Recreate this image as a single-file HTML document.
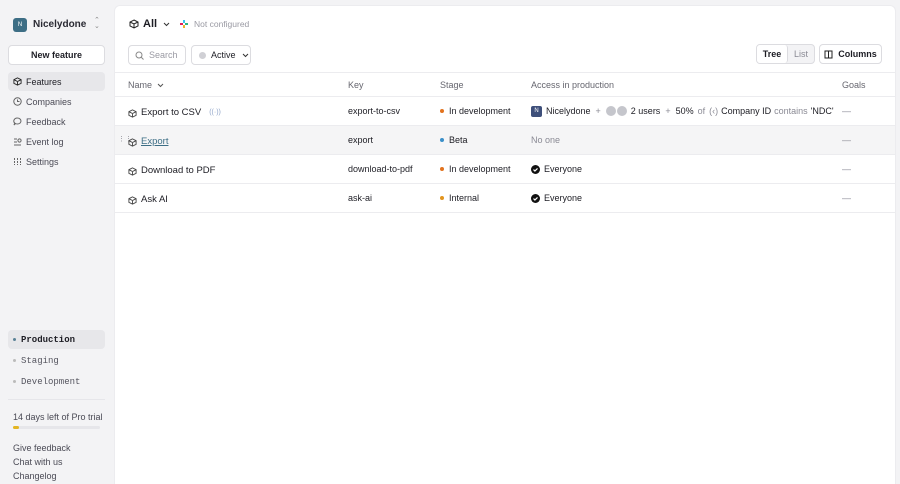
<!DOCTYPE html>
<html style="width:900px;height:484px;overflow:hidden"><head><style>
*{box-sizing:border-box;margin:0;padding:0}
body{width:900px;height:484px;background:#f3f3f5;font-family:"Liberation Sans",sans-serif;font-size:9px;color:#1d1d24;position:relative;overflow:hidden}
.abs{position:absolute}
.main{position:absolute;left:114px;top:5px;width:782px;height:500px;background:#fff;border-radius:6px;border:1px solid #ececef}
.nav{position:absolute;left:8px;width:97px;height:19px;border-radius:4px;display:flex;align-items:center;padding-left:5px;color:#4a4a55}
.nav svg{margin-right:4px}
.btn{position:absolute;border:1px solid #dcdce0;border-radius:4px;background:#fff;display:flex;align-items:center;justify-content:center;font-weight:bold}
.row{position:absolute;left:0;width:780px;height:29px;border-bottom:1px solid #ececef}
.c{position:absolute;top:0;height:28px;display:flex;align-items:center;line-height:12px}
.n{top:2px}
.dot{width:4px;height:4px;border-radius:50%;display:inline-block;margin-right:5px}
.mono{font-family:"Liberation Mono",monospace;font-size:9px}
.g{color:#8a8a94}
</style></head><body>
<div class="abs" style="left:13px;top:18px;width:14px;height:14px;border-radius:3px;background:#3d6e85;color:#fff;font-size:6px;display:flex;align-items:center;justify-content:center">N</div>
<div class="abs" style="left:33px;top:19px;font-size:10px;font-weight:bold;color:#2a2a33">Nicelydone</div>
<div class="abs" style="left:94px;top:18px;font-size:7px;color:#888;line-height:6px">⌃<br>⌄</div>
<div class="btn" style="left:8px;top:45px;width:97px;height:20px;font-size:9px">New feature</div>
<div class="nav" style="top:72px;background:#e7e7ea;color:#1d1d24"><svg width="9" height="9" viewBox="0 0 10 10"><path d="M5 1L9 3v4L5 9 1 7V3z M1 3l4 2 4-2 M5 5v4" fill="none" stroke="#222" stroke-width="1"/></svg>Features</div>
<div class="nav" style="top:92px"><svg width="9" height="9"><circle cx="4.5" cy="4.5" r="3.7" fill="none" stroke="#666"/><path d="M4.5 2.5v2h2" stroke="#666" fill="none"/></svg>Companies</div>
<div class="nav" style="top:112px"><svg width="9" height="9"><path d="M4.5 1a3.5 3 0 1 1-2 5.5L1 8l.7-2A3.5 3 0 0 1 4.5 1z" fill="none" stroke="#666"/></svg>Feedback</div>
<div class="nav" style="top:132px"><svg width="9" height="9"><path d="M1 2h3M1 5h3M1 8h7" stroke="#666"/><circle cx="6.5" cy="3.5" r="1.6" fill="none" stroke="#666"/></svg>Event log</div>
<div class="nav" style="top:152px"><svg width="9" height="9"><path d="M1.5 1v7M4.5 1v7M7.5 1v7" stroke="#666" stroke-dasharray="2 1"/></svg>Settings</div>
<div class="nav mono" style="top:330px;background:#e7e7ea;color:#1d1d24;font-weight:bold"><span class="dot" style="background:#5a8296;width:3px;height:3px"></span>Production</div>
<div class="nav mono" style="top:351px;color:#55555f"><span class="dot" style="background:#bbb;width:3px;height:3px"></span>Staging</div>
<div class="nav mono" style="top:372px;color:#55555f"><span class="dot" style="background:#bbb;width:3px;height:3px"></span>Development</div>
<div class="abs" style="left:8px;top:399px;width:97px;border-top:1px solid #e6e6ea"></div>
<div class="abs" style="left:13px;top:412px;color:#4a4a55">14 days left of Pro trial</div>
<div class="abs" style="left:13px;top:426px;width:87px;height:3px;border-radius:2px;background:#e6e6ea"><div style="width:6px;height:3px;border-radius:2px;background:#e3b522"></div></div>
<div class="abs" style="left:13px;top:441px;color:#4a4a55;line-height:14px">Give feedback<br>Chat with us<br>Changelog</div>

<div class="main">
<div class="abs" style="left:14px;top:12px;display:flex;align-items:center;font-size:11px;font-weight:bold"><svg width="10" height="10" viewBox="0 0 10 10" style="margin-right:4px"><path d="M5 1L9 3v4L5 9 1 7V3z M1 3l4 2 4-2 M5 5v4" fill="none" stroke="#222"/></svg>All <svg width="7" height="5" style="margin-left:6px"><path d="M1 1l2.5 2.5L6 1" fill="none" stroke="#333"/></svg></div>
<div class="abs" style="left:64px;top:13px;display:flex;align-items:center;color:#9a9aa3;font-size:8.5px"><svg width="10" height="10" style="margin-right:5px"><rect x="1" y="4" width="3" height="2" fill="#e01e5a"/><rect x="6" y="4" width="3" height="2" fill="#2eb67d"/><rect x="4" y="1" width="2" height="3" fill="#36c5f0"/><rect x="4" y="6" width="2" height="3" fill="#ecb22e"/></svg>Not configured</div>
<div class="btn" style="left:13px;top:39px;width:58px;height:20px;font-weight:normal;color:#9a9aa3;justify-content:flex-start;padding-left:6px"><svg width="9" height="9" style="margin-right:5px"><circle cx="4" cy="4" r="3" fill="none" stroke="#888"/><path d="M6 6l2.5 2.5" stroke="#888"/></svg>Search</div>
<div class="btn" style="left:76px;top:39px;width:60px;height:20px;font-weight:normal;justify-content:flex-start;padding-left:7px"><span class="dot" style="background:#d0d0d5;width:7px;height:7px"></span>Active<svg width="7" height="5" style="margin-left:6px"><path d="M1 1l2.5 2.5L6 1" fill="none" stroke="#333"/></svg></div>
<div class="btn" style="left:641px;top:38px;width:59px;height:20px;background:#f3f3f5;font-weight:normal;color:#8a8a94;justify-content:flex-start"><div style="width:31px;height:18px;background:#fff;border-right:1px solid #dcdce0;border-radius:3px;display:flex;align-items:center;justify-content:center;font-weight:bold;color:#1d1d24">Tree</div><span style="margin-left:6px">List</span></div>
<div class="btn" style="left:704px;top:38px;width:63px;height:20px"><svg width="9" height="9" style="margin-right:5px"><rect x="1" y="1" width="7" height="7" fill="none" stroke="#222"/><path d="M4.5 1v7" stroke="#222"/></svg>Columns</div>
<div class="row" style="top:66px;height:25px;border-top:1px solid #ececef;color:#66666f">
<div class="c" style="left:13px;height:24px">Name <svg width="7" height="5" style="margin-left:5px"><path d="M1 1l2.5 2.5L6 1" fill="none" stroke="#555"/></svg></div>
<div class="c" style="left:233px;height:24px">Key</div>
<div class="c" style="left:325px;height:24px">Stage</div>
<div class="c" style="left:416px;height:24px">Access in production</div>
<div class="c" style="left:727px;height:24px">Goals</div>
</div>
<div class="row" style="top:91px">
<div class="c n" style="left:13px;font-size:9.5px"><svg width="9" height="9" viewBox="0 0 10 10" style="margin-right:4px"><path d="M5 1L9 3v4L5 9 1 7V3z M1 3l4 2 4-2 M5 5v4" fill="none" stroke="#444"/></svg>Export to CSV <span style="color:#8fa4c8;margin-left:8px;font-size:7px">((·))</span></div>
<div class="c" style="left:233px">export-to-csv</div>
<div class="c" style="left:325px"><span class="dot" style="background:#e2731e"></span>In development</div>
<div class="c" style="left:416px"><span style="width:11px;height:11px;background:#3e4f7a;color:#fff;border-radius:2px;font-size:6px;display:inline-flex;align-items:center;justify-content:center;margin-right:4px">N</span>Nicelydone <span class="g" style="margin:0 5px">+</span><span style="width:10px;height:10px;border-radius:50%;background:#c5c6cc;display:inline-block"></span><span style="width:10px;height:10px;border-radius:50%;background:#c5c6cc;display:inline-block;margin:0 4px 0 1px"></span>2 users <span class="g" style="margin:0 5px">+</span>50% <span class="g" style="margin:0 4px">of</span><span class="g" style="margin-right:3px">(‹)</span>Company ID <span class="g" style="margin:0 3px">contains</span>'NDC'</div>
<div class="c g" style="left:727px">—</div>
</div>
<div class="row" style="top:120px;background:#f5f5f6">
<div class="c g" style="left:3px;font-size:7px">⋮⋮</div>
<div class="c n" style="left:13px;font-size:9.5px;color:#3d6e85"><svg width="9" height="9" viewBox="0 0 10 10" style="margin-right:4px"><path d="M5 1L9 3v4L5 9 1 7V3z M1 3l4 2 4-2 M5 5v4" fill="none" stroke="#444"/></svg><u>Export</u></div>
<div class="c" style="left:233px">export</div>
<div class="c" style="left:325px"><span class="dot" style="background:#3a8fc9"></span>Beta</div>
<div class="c g" style="left:416px">No one</div>
<div class="c g" style="left:727px">—</div>
</div>
<div class="row" style="top:149px">
<div class="c n" style="left:13px;font-size:9.5px"><svg width="9" height="9" viewBox="0 0 10 10" style="margin-right:4px"><path d="M5 1L9 3v4L5 9 1 7V3z M1 3l4 2 4-2 M5 5v4" fill="none" stroke="#444"/></svg>Download to PDF</div>
<div class="c" style="left:233px">download-to-pdf</div>
<div class="c" style="left:325px"><span class="dot" style="background:#e2731e"></span>In development</div>
<div class="c" style="left:416px"><svg width="9" height="9" style="margin-right:4px"><circle cx="4.5" cy="4.5" r="4.5" fill="#111"/><path d="M2.5 4.6l1.4 1.4 2.6-2.6" stroke="#fff" fill="none" stroke-width="1.2"/></svg>Everyone</div>
<div class="c g" style="left:727px">—</div>
</div>
<div class="row" style="top:178px">
<div class="c n" style="left:13px;font-size:9.5px"><svg width="9" height="9" viewBox="0 0 10 10" style="margin-right:4px"><path d="M5 1L9 3v4L5 9 1 7V3z M1 3l4 2 4-2 M5 5v4" fill="none" stroke="#444"/></svg>Ask AI</div>
<div class="c" style="left:233px">ask-ai</div>
<div class="c" style="left:325px"><span class="dot" style="background:#e2951e"></span>Internal</div>
<div class="c" style="left:416px"><svg width="9" height="9" style="margin-right:4px"><circle cx="4.5" cy="4.5" r="4.5" fill="#111"/><path d="M2.5 4.6l1.4 1.4 2.6-2.6" stroke="#fff" fill="none" stroke-width="1.2"/></svg>Everyone</div>
<div class="c g" style="left:727px">—</div>
</div>
</div>
</body></html>
